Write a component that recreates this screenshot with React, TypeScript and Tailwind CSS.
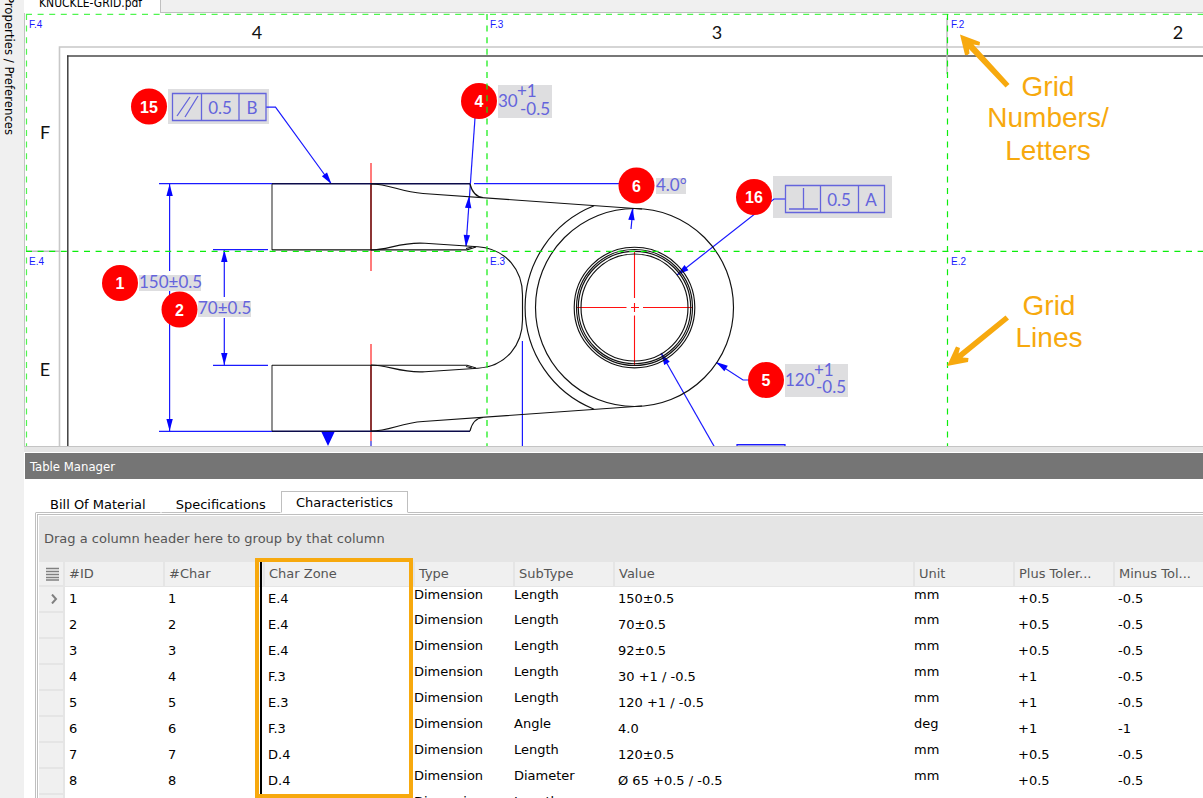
import { useState } from 'react';
import { clsx } from 'clsx';

const BLUE = '#1a1aff';
const NOTE = '#6464dc';
const ORANGE = '#f7a90e';

const columns = [
  { key: 'id', label: '#ID', width: 'w-[100px]' },
  { key: 'char', label: '#Char', width: 'w-[100px]' },
  { key: 'zone', label: 'Char Zone', width: 'w-[150px]' },
  { key: 'type', label: 'Type', width: 'w-[100px]', top: true },
  { key: 'subType', label: 'SubType', width: 'w-[100px]', top: true },
  { key: 'value', label: 'Value', width: 'w-[300px]' },
  { key: 'unit', label: 'Unit', width: 'w-[100px]', top: true },
  { key: 'plus', label: 'Plus Toler...', width: 'w-[100px]' },
  { key: 'minus', label: 'Minus Tol...', width: 'w-[100px]' },
];

const rows: Record<string, string>[] = [
  { id: '1', char: '1', zone: 'E.4', type: 'Dimension', subType: 'Length', value: '150±0.5', unit: 'mm', plus: '+0.5', minus: '-0.5' },
  { id: '2', char: '2', zone: 'E.4', type: 'Dimension', subType: 'Length', value: '70±0.5', unit: 'mm', plus: '+0.5', minus: '-0.5' },
  { id: '3', char: '3', zone: 'E.4', type: 'Dimension', subType: 'Length', value: '92±0.5', unit: 'mm', plus: '+0.5', minus: '-0.5' },
  { id: '4', char: '4', zone: 'F.3', type: 'Dimension', subType: 'Length', value: '30 +1 / -0.5', unit: 'mm', plus: '+1', minus: '-0.5' },
  { id: '5', char: '5', zone: 'E.3', type: 'Dimension', subType: 'Length', value: '120 +1 / -0.5', unit: 'mm', plus: '+1', minus: '-0.5' },
  { id: '6', char: '6', zone: 'F.3', type: 'Dimension', subType: 'Angle', value: '4.0', unit: 'deg', plus: '+1', minus: '-1' },
  { id: '7', char: '7', zone: 'D.4', type: 'Dimension', subType: 'Length', value: '120±0.5', unit: 'mm', plus: '+0.5', minus: '-0.5' },
  { id: '8', char: '8', zone: 'D.4', type: 'Dimension', subType: 'Diameter', value: 'Ø 65 +0.5 / -0.5', unit: 'mm', plus: '+0.5', minus: '-0.5' },
  { id: '9', char: '9', zone: 'D.4', type: 'Dimension', subType: 'Length', value: '', unit: '', plus: '', minus: '' },
];

const balloons = [
  { n: 15, x: 149, y: 106.5 },
  { n: 4, x: 479, y: 101 },
  { n: 6, x: 636.5, y: 185.5 },
  { n: 16, x: 754, y: 197 },
  { n: 1, x: 120, y: 283 },
  { n: 2, x: 179.5, y: 309.5 },
  { n: 5, x: 766, y: 380 },
];

const zones = [
  { label: 'F.4', x: 29, y: 28 },
  { label: 'F.3', x: 490, y: 28 },
  { label: 'F.2', x: 951, y: 28 },
  { label: 'E.4', x: 29, y: 265 },
  { label: 'E.3', x: 490, y: 265 },
  { label: 'E.2', x: 951, y: 265 },
];

// Filled arrow head, tip at (x, y); angle 0 points up
function Head({ x, y, angle }: { x: number; y: number; angle: number }) {
  return <path d="M0 0 L3.2 12 L-3.2 12 Z" fill="#0505ff" transform={`translate(${x} ${y}) rotate(${angle})`} />;
}

function Drawing() {
  return (
    <svg className="block h-full w-full" role="img" aria-label="Knuckle drawing with grid">
      <g transform="translate(-25 -13)" fill="none">
        {/* sheet frame */}
        <path d="M3000 47H59.5V460" stroke="#c8c8c8" strokeWidth="1.6" />
        <path d="M67 56H3000" stroke="#777" strokeWidth="1.8" />
        <path d="M67.8 55.5V460" stroke="#333" strokeWidth="1.4" />
        <path d="M947 18V74M26 251.3H60" stroke="#bdbdbd" strokeWidth="1.4" />

        {/* highlighted notes */}
        <g fill="#dedee0">
          <rect x="168" y="89" width="101" height="35" />
          <rect x="498" y="85" width="54" height="33" />
          <rect x="656" y="178" width="30" height="16" />
          <rect x="773" y="176" width="119" height="42" />
          <rect x="139" y="275" width="62" height="16" />
          <rect x="198" y="301" width="53" height="16" />
          <rect x="785" y="364" width="63" height="33" />
        </g>

        {/* dimension and leader lines */}
        <g stroke={BLUE} strokeWidth="1.2">
          <path d="M159 183.7H272M474 183.7H619M159 431.3H272M213 249.7H268M213 365.3H268" />
          <path d="M169.6 184V271M169.6 291V431M224.3 250V297M224.3 318V365" />
          <path d="M266 107.2H275.5L331 183.5" />
          <path d="M475 118L466 246" />
          <path d="M631 229L633 208" />
          <path d="M785 199H774L677 275" />
          <path d="M716 362.5L743 380H752" />
          <path d="M661 353L714.5 447" />
          <path d="M522.4 341V447" />
          <path d="M737 450V444.6H785V450" fill="#c4c4e8" />
        </g>
        <Head x={169.6} y={184} angle={0} />
        <Head x={169.6} y={431} angle={180} />
        <Head x={224.3} y={250} angle={0} />
        <Head x={224.3} y={365} angle={180} />
        <Head x={331.5} y={184} angle={144} />
        <Head x={469} y={196} angle={4} />
        <Head x={466} y={247} angle={184} />
        <Head x={632.5} y={208} angle={5} />
        <Head x={677} y={275} angle={232} />
        <Head x={716} y={362} angle={-57} />
        <Head x={661} y={353} angle={-30} />
        <path d="M321 431H335L328 446Z" fill="#0505ff" />

        {/* centre lines */}
        <path d="M371 163V271M371 344V441" stroke="#ff5050" strokeWidth="1.5" />
        <path d="M371 441V447" stroke="#5050e0" strokeWidth="1.5" />
        <path d="M577 307.5H626.5M631 307.5H639M643 307.5H692M634.5 252V298M634.5 303V312M634.5 315.5V366" stroke="#ff1010" strokeWidth="1.1" />

        {/* part outline */}
        <path d="M272 184V250M272 365V431" stroke="#555" strokeWidth="1.3" />
        <path d="M371 184V250M371 365V431" stroke="#501010" strokeWidth="1.3" />
        <path d="M272 183.8H470M272 431.2H470" stroke="#0b0b4a" strokeWidth="1.4" />
        <g stroke="#111" strokeWidth="1.15">
          <path d="M272 249.8H467L476 247M272 365.2H467L476 368" />
          <path d="M371 184C390 184 400 192 423 193.5L642 209M371 431C390 431 400 423 423 421.5L642 406" />
          <path d="M470 184C472 192 476 197 483 197.5M470 431C472 423 476 418 483 417.5" />
          <path d="M371 250C388 250 402 241.5 425 243.3L478 246.7C507 249 522.5 271 522.5 295V320C522.5 344 507 366 478 368.3L425 371.7C402 373.5 388 365 371 365" />
          <path d="M466 248.5L472 247M466 366.5L472 368" />
          <path d="M594 205.8A109.5 109.5 0 0 0 594 409.2" />
          <circle cx="634.5" cy="307.5" r="99" />
          <circle cx="634.5" cy="307.5" r="60.3" />
          <circle cx="634.5" cy="307.5" r="58" />
          <circle cx="634.5" cy="307.5" r="56.2" />
          <circle cx="634.5" cy="307.5" r="53.5" />
        </g>

        {/* control frames */}
        <g stroke={NOTE} strokeWidth="1.3">
          <path d="M172.5 93.5H266V120.5H172.5ZM201.5 93.5V120.5M239 93.5V120.5M177 116L190 97M185 117L198 96" />
          <path d="M785.5 185.5H884.5V212.5H785.5ZM820.5 185.5V212.5M858.5 185.5V212.5M789 209H818M803.5 188V209" />
        </g>

        <g fill={NOTE} className="font-['Lato',sans-serif] text-[17px]">
          <text x="220" y="114" textAnchor="middle">0.5</text>
          <text x="252" y="114" textAnchor="middle">B</text>
          <text x="839" y="206" textAnchor="middle">0.5</text>
          <text x="871" y="206" textAnchor="middle">A</text>
          <text x="498" y="107">30</text>
          <text x="517" y="97">+1</text>
          <text x="520" y="115">-0.5</text>
          <text x="656" y="191">4.0°</text>
          <text x="139" y="288">150±0.5</text>
          <text x="198" y="314">70±0.5</text>
          <text x="785" y="386">120</text>
          <text x="814" y="376">+1</text>
          <text x="816" y="393">-0.5</text>
        </g>

        <g fill="#111" textAnchor="middle" className="font-['Lato',sans-serif] text-[18px]">
          <text x="257" y="39">4</text>
          <text x="717" y="39">3</text>
          <text x="1178" y="39">2</text>
          <text x="45" y="139">F</text>
          <text x="45" y="376">E</text>
        </g>

        {balloons.map(b => (
          <g key={b.n}>
            <circle cx={b.x} cy={b.y} r="18" fill="#ff0000" />
            <text x={b.x} y={b.y + 6} fill="#fff" textAnchor="middle" className="font-['Liberation_Sans',sans-serif] text-[16px] font-bold">{b.n}</text>
          </g>
        ))}

        {/* zone grid */}
        <g strokeDasharray="6 5.6">
          <path d="M26 14.4H3000M26.5 14V446" stroke="#50f550" strokeWidth="1.2" />
          <path d="M487 14V446M947.5 14V446M26 251.3H3000" stroke="#0ced0c" strokeWidth="1.2" />
        </g>
        <g fill={BLUE} className="font-['Liberation_Sans',sans-serif] text-[10px]">
          {zones.map(z => <text key={z.label} x={z.x} y={z.y}>{z.label}</text>)}
        </g>

        {/* callouts */}
        <g fill={ORANGE}>
          <path d="M960 34.5L980 42L979.5 45.5L973.5 44.5L1009.5 84L1005.5 87.5L969 49L969.5 53.5L967.5 55H965Z" />
          <path d="M947 366L956 346.5L960 348L958.5 353.5L1005.5 315.5L1009 319.5L962.5 357.5L968.5 358L968 362Z" />
          <g textAnchor="middle" className="font-['Liberation_Sans',sans-serif] text-[28px]">
            <text x="1048" y="96">Grid</text>
            <text x="1048" y="127">Numbers/</text>
            <text x="1048" y="160">Letters</text>
            <text x="1049" y="315">Grid</text>
            <text x="1049" y="347">Lines</text>
          </g>
        </g>
      </g>
    </svg>
  );
}

function CharacteristicsTable() {
  return (
    <table className="w-[1175px] table-fixed border-collapse text-left text-[13px] leading-4">
      <thead>
        <tr className="h-6 border-b border-[#e5e5e5] bg-[#f0f0f0] text-[#555]">
          <th className="w-[25px] border-r-2 border-[#e5e5e5] p-0">
            <svg className="ml-[7px]" width="13" height="14" viewBox="0 0 13 14" aria-label="Columns">
              <path d="M0 1.5H13M0 4.5H13M0 7.5H13M0 10.5H13M0 13H13" stroke="#808080" strokeWidth="1.5" />
            </svg>
          </th>
          {columns.map(c => (
            <th key={c.key} className={clsx(c.width, 'whitespace-nowrap border-r-2 border-[#e5e5e5] px-1 font-normal')}>{c.label}</th>
          ))}
        </tr>
      </thead>
      <tbody>
        {rows.map((row, i) => (
          <tr key={row.id} className="h-[26px]">
            <td className="border-y-2 border-r-2 border-[#e5e5e5] bg-[#f0f0f0] p-0">
              {i === 0 && (
                <svg className="ml-3" width="7" height="10" viewBox="0 0 7 10" aria-label="Current row">
                  <path d="M1 0.5L5 5L1 9.5" fill="none" stroke="#808080" strokeWidth="2" />
                </svg>
              )}
            </td>
            {columns.map(c => (
              <td key={c.key} className={clsx('whitespace-nowrap py-0', c.top ? 'px-0 align-top' : 'px-1 align-middle')}>{row[c.key]}</td>
            ))}
          </tr>
        ))}
      </tbody>
    </table>
  );
}

export default function App() {
  const tabs = ['Bill Of Material', 'Specifications', 'Characteristics'];
  const [tab, setTab] = useState('Characteristics');

  return (
    <div className="flex h-screen overflow-hidden bg-[#f0f0f0] font-['DejaVu_Sans',sans-serif] text-[13px] text-black">
      <aside className="flex w-6 shrink-0 items-start pl-px">
        <button className="-mt-1 whitespace-nowrap font-['DejaVu_Sans_Condensed','DejaVu_Sans',sans-serif] text-[13px] leading-4 [writing-mode:vertical-rl]">Properties / Preferences</button>
      </aside>

      <main className="flex min-w-0 flex-1 flex-col">
        <div className="flex h-[13px] shrink-0">
          <div className="flex w-[137px] items-end border-r border-[#c0c0c0] bg-white pl-[15px]">
            <button className="whitespace-nowrap pb-1 font-['DejaVu_Sans_Condensed','DejaVu_Sans',sans-serif] text-[12px] leading-3">KNUCKLE-GRID.pdf</button>
          </div>
          <div className="flex-1 border-b border-[#c0c0c0]" />
        </div>

        <section className="h-[434px] shrink-0 overflow-hidden border-b border-l border-[#c4c4c4] bg-white">
          <Drawing />
        </section>
        <div className="h-[6px] shrink-0 border-b border-white bg-[#e5e5e5]" />

        <section className="flex min-h-0 flex-1 flex-col bg-white pl-px">
          <h2 className="h-[26px] shrink-0 bg-[#757575] pl-[5px] font-['DejaVu_Sans_Condensed','DejaVu_Sans',sans-serif] text-[13px] leading-7 text-white">Table Manager</h2>

          <div className="relative z-10 mt-3 flex h-[22px] shrink-0 items-stretch pl-[10px]" role="tablist">
            {tabs.map(t => (
              <button
                key={t}
                role="tab"
                aria-selected={t === tab}
                onClick={() => setTab(t)}
                className={clsx('border px-[14px]', t === tab ? 'border-[#bfbfbf] border-b-white bg-white pt-px' : 'border-transparent border-b-[#bfbfbf] pt-[3px]')}
              >
                {t}
              </button>
            ))}
            <div className="flex-1 border-b border-[#bfbfbf]" />
          </div>

          <div className="ml-[10px] min-h-0 flex-1 border-l border-[#bfbfbf] pl-px pt-px">
            <div className="h-full border-l border-t border-[#bfbfbf] pl-px pt-px">
              <div className="relative h-full overflow-hidden">
                <div className="flex h-[46px] items-center bg-[#e5e5e5] pl-[5px] text-[#555]">Drag a column header here to group by that column</div>
                <CharacteristicsTable />
                {/* marker around the Char Zone column */}
                <div className="pointer-events-none absolute left-[216px] top-[42px] h-[240px] w-[158px] border-4 border-[#f7a90e] pl-px">
                  <div className="h-full w-[2px] bg-black" />
                </div>
              </div>
            </div>
          </div>
        </section>
      </main>
    </div>
  );
}
